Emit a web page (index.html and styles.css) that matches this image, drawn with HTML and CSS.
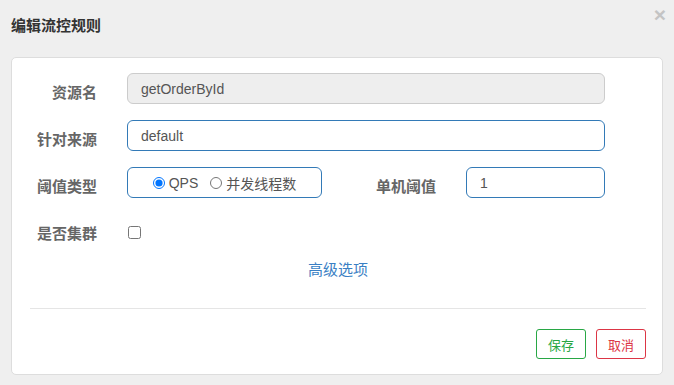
FILE: index.html
```html
<!DOCTYPE html>
<html lang="zh-CN">
  <head>
    <meta charset="UTF-8" />
    <title>编辑流控规则</title>
    <link rel="stylesheet" href="styles.css">
  </head>
  <body>
    <div class="dialog">
      <div class="dialog-header">
        <div class="dialog-title">编辑流控规则</div>
        <span class="close">&times;</span>
      </div>
      <div class="card">
        <div class="form">
          <div class="row">
            <label class="label">资源名</label>
            <input class="input input-wide" type="text" value="getOrderById" disabled />
          </div>
          <div class="row">
            <label class="label">针对来源</label>
            <input class="input input-wide" type="text" value="default" />
          </div>
          <div class="row">
            <label class="label">阈值类型</label>
            <div class="radio-box">
              <label class="radio"><input type="radio" name="grade" checked />QPS</label>
              <label class="radio"><input type="radio" name="grade" />并发线程数</label>
            </div>
            <label class="label label-mid">单机阈值</label>
            <input class="input input-small" type="text" value="1" />
          </div>
          <div class="row">
            <label class="label">是否集群</label>
            <input class="check" type="checkbox" />
          </div>
          <div class="advanced">
            <a href="#">高级选项</a>
          </div>
        </div>
        <div class="footer">
          <button class="btn btn-save">保存</button>
          <button class="btn btn-cancel">取消</button>
        </div>
      </div>
    </div>
  </body>
</html>
```

FILE: styles.css
```css
body {
  margin: 0;
  padding: 0;
  background: #efefef;
  font-family: "Liberation Sans", "Noto Sans CJK SC", sans-serif;
  color: #555;
}

.dialog {
  position: relative;
  padding: 0 11px 11px;
}

.dialog-header {
  height: 57px;
  box-sizing: border-box;
  padding-top: 17px;
}

.dialog-title {
  font-size: 15px;
  line-height: 17px;
  font-weight: bold;
  color: #333;
}

.close {
  position: absolute;
  top: 3px;
  right: 8px;
  font-size: 21px;
  font-weight: bold;
  line-height: 24px;
  color: #c4c4c4;
}

.card {
  background: #fff;
  border: 1px solid #ddd;
  border-radius: 5px;
  padding: 15px 16px 15px;
}

.row {
  display: flex;
  align-items: center;
  height: 31px;
  margin-bottom: 16px;
}

.label {
  width: 69px;
  margin-right: 30px;
  padding-top: 5px;
  text-align: right;
  font-size: 15px;
  font-weight: bold;
  color: #666;
  flex-shrink: 0;
}

.label-mid {
  width: 114px;
}

.input {
  height: 31px;
  box-sizing: border-box;
  border: 1px solid #337ab7;
  border-radius: 6px;
  padding: 0 13px;
  font-family: inherit;
  font-size: 14px;
  color: #555;
  background: #fff;
  outline: none;
}

.input[disabled] {
  background: #eee;
  border-color: #ccc;
}

.input-wide {
  width: 478px;
}

.input-small {
  width: 139px;
}

.radio-box {
  width: 195px;
  height: 31px;
  box-sizing: border-box;
  border: 1px solid #337ab7;
  border-radius: 6px;
  display: flex;
  align-items: center;
  justify-content: center;
  gap: 12px;
  font-size: 14px;
  color: #555;
}

.radio {
  display: flex;
  align-items: center;
}

.radio input {
  margin: 0 4px 0 0;
  width: 12px;
  height: 12px;
}

.check {
  margin: 6px 0 0 1px;
  width: 13px;
  height: 13px;
}

.advanced {
  text-align: center;
  font-size: 15px;
  line-height: 20px;
  margin-top: -1px;
  padding-bottom: 28px;
  border-bottom: 1px solid #e5e5e5;
  margin-left: 2px;
}

.advanced a {
  color: #3a7fc4;
  text-decoration: none;
}

.footer {
  display: flex;
  justify-content: flex-end;
  gap: 10px;
  padding-top: 20px;
}

.btn {
  width: 50px;
  height: 30px;
  background: #fff;
  border: 1px solid;
  border-radius: 3px;
  font-family: inherit;
  font-size: 13px;
  padding: 0;
}

.btn-save {
  border-color: #28a745;
  color: #28a745;
}

.btn-cancel {
  border-color: #dc3545;
  color: #dc3545;
}
```
